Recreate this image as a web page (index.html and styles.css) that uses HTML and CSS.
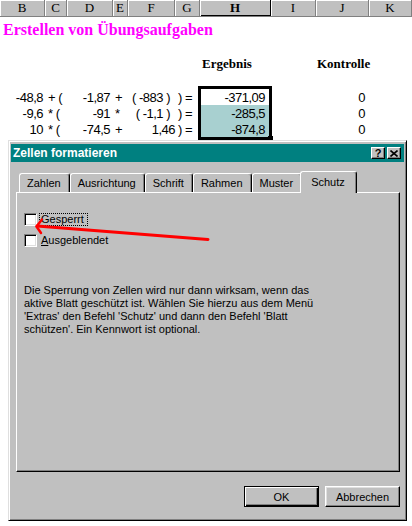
FILE: index.html
```html
<!DOCTYPE html>
<html lang="de">
  <head>
    <meta charset="UTF-8" />
    <meta name="viewport" content="width=device-width, initial-scale=1.0" />
    <title>Zellen formatieren</title>
    <link rel="stylesheet" href="styles.css">
  </head>
  <body>
    <div class="sheet">
      <div class="row head">
        <div class="hd">B</div>
        <div class="hd">C</div>
        <div class="hd">D</div>
        <div class="hd">E</div>
        <div class="hd">F</div>
        <div class="hd">G</div>
        <div class="hd hd-sel">H</div>
        <div class="hd">I</div>
        <div class="hd">J</div>
        <div class="hd">K</div>
      </div>
      <div class="title">Erstellen von Übungsaufgaben</div>
      <div class="row labels">
        <div class="lbl lbl-h">Ergebnis</div>
        <div class="lbl lbl-j">Kontrolle</div>
      </div>
      <div class="data">
        <div class="row">
          <div class="c r pb">-48,8</div>
          <div class="c l">+ (</div>
          <div class="c r pd">-1,87</div>
          <div class="c l pe">+</div>
          <div class="c r pf">( -883 )</div>
          <div class="c l">) =</div>
          <div class="c r res first">-371,09<div class="selection"><span class="handle"></span></div></div>
          <div class="c"></div>
          <div class="c r pj">0</div>
          <div class="c"></div>
        </div>
        <div class="row">
          <div class="c r pb">-9,6</div>
          <div class="c l">* (</div>
          <div class="c r pd">-91</div>
          <div class="c l pe">*</div>
          <div class="c r pf">( -1,1 )</div>
          <div class="c l">) =</div>
          <div class="c r res marked">-285,5</div>
          <div class="c"></div>
          <div class="c r pj">0</div>
          <div class="c"></div>
        </div>
        <div class="row">
          <div class="c r pb">10</div>
          <div class="c l">* (</div>
          <div class="c r pd">-74,5</div>
          <div class="c l pe">+</div>
          <div class="c r">1,46</div>
          <div class="c l">) =</div>
          <div class="c r res marked">-874,8</div>
          <div class="c"></div>
          <div class="c r pj">0</div>
          <div class="c"></div>
        </div>
      </div>
    </div>

    <div class="dialog">
      <div class="titlebar">
        <span class="caption">Zellen formatieren</span>
        <span class="tb-btn">?</span>
        <span class="tb-btn">
          <svg width="8" height="7" viewBox="0 0 8 7"><path d="M0.5 0.5 L7.5 6.5 M7.5 0.5 L0.5 6.5" stroke="#000" stroke-width="1.6"/></svg>
        </span>
      </div>
      <div class="tabs">
        <div class="tab">Zahlen</div>
        <div class="tab">Ausrichtung</div>
        <div class="tab">Schrift</div>
        <div class="tab">Rahmen</div>
        <div class="tab">Muster</div>
        <div class="tab active">Schutz</div>
      </div>
      <div class="panel">
        <div class="check"><span class="box"></span><span class="focus">Gesperrt</span></div>
        <div class="check"><span class="box"></span><span class="text"><u>A</u>usgeblendet</span></div>
        <p class="note">Die Sperrung von Zellen wird nur dann wirksam, wenn das<br>aktive Blatt geschützt ist. Wählen Sie hierzu aus dem Menü<br>'Extras' den Befehl 'Schutz' und dann den Befehl 'Blatt<br>schützen'. Ein Kennwort ist optional.</p>
      </div>
      <div class="buttons">
        <button class="btn default">OK</button>
        <button class="btn">Abbrechen</button>
      </div>
    </div>

    <svg class="arrow" width="412" height="526" viewBox="0 0 412 526">
      <path d="M208 239.5 L37 226" stroke="#ff0000" stroke-width="3" fill="none" stroke-linecap="round"/>
      <path d="M42 219.5 L36.5 226.5 L41 233" stroke="#ff0000" stroke-width="2.5" fill="none" stroke-linecap="round" stroke-linejoin="round"/>
    </svg>
  </body>
</html>
```

FILE: styles.css
```css
:root {
  --cols: 45px 22px 46px 15px 47px 25px 71px 45px 53px 43px;
}
body {
  margin: 0;
  width: 412px;
  height: 526px;
  overflow: hidden;
  position: relative;
  background: #fff;
  font-family: "Liberation Sans", Arial, sans-serif;
  color: #000;
}
.row {
  display: grid;
  grid-template-columns: var(--cols);
}

/* spreadsheet */
.head {
  height: 16px;
  background: #c0c0c0;
  border-bottom: 1px solid #808080;
}
.hd {
  border-right: 1px solid #808080;
  box-shadow: inset 1px 1px #fff;
  text-align: center;
  font: 13px/16px "Liberation Serif", serif;
}
.hd-sel {
  font-weight: bold;
  border-right-color: #000;
  box-shadow: inset 1px 1px #fff, inset 0 -1px #000;
}
.title {
  height: 24px;
  padding-left: 3px;
  font: bold 16px/25px "Liberation Serif", serif;
  color: #ff00ff;
}
.labels {
  margin-top: 14px;
  height: 17px;
  font: bold 13px/17px "Liberation Serif", serif;
}
.lbl-h {
  grid-column: 7;
  padding-left: 2px;
}
.lbl-j {
  grid-column: 9;
  padding-left: 1px;
}
.data {
  margin-top: 17px;
}
.data .row {
  height: 16px;
}
.c {
  padding-top: 2px;
  font: 13px/14px "Liberation Sans Narrow", "Liberation Sans", sans-serif;
  letter-spacing: -0.5px;
  white-space: pre;
}
.r {
  text-align: right;
}
.l {
  padding-left: 3px;
}
.pb {
  padding-right: 2px;
}
.pd {
  padding-right: 3px;
}
.pe {
  padding-left: 2px;
}
.pf {
  padding-right: 5px;
}
.pj {
  padding-right: 4px;
}
.res {
  padding-right: 6px;
}
.first {
  position: relative;
}
.marked {
  background: #a8d0d0;
}
.selection {
  position: absolute;
  left: -2px;
  top: -3px;
  width: 74px;
  height: 54px;
  box-sizing: border-box;
  border: 3px solid #000;
}
.handle {
  position: absolute;
  right: -4px;
  bottom: -4px;
  width: 5px;
  height: 5px;
  background: #000;
}

/* dialog */
.dialog {
  position: absolute;
  left: 8px;
  top: 140px;
  width: 399px;
  height: 381px;
  box-sizing: border-box;
  padding: 2px 1px 1px 1px;
  background: #c0c0c0;
  border: 1px solid;
  border-color: #dfdfdf #000 #000 #dfdfdf;
  box-shadow: inset 1px 1px #fff, inset -1px -1px #808080;
  font-size: 11px;
}
.titlebar {
  display: flex;
  align-items: center;
  height: 18px;
  margin: 1px 1px 0 1px;
  background: #008080;
}
.caption {
  flex: 1;
  padding-left: 2px;
  color: #fff;
  font-weight: bold;
  font-size: 12px;
}
.tb-btn {
  display: flex;
  align-items: center;
  justify-content: center;
  width: 14px;
  height: 12px;
  box-sizing: border-box;
  margin-right: 1px;
  background: #c0c0c0;
  border: 1px solid;
  border-color: #fff #000 #000 #fff;
  box-shadow: inset -1px -1px #808080;
  font-weight: bold;
  font-size: 11px;
  line-height: 10px;
}
.tb-btn:last-child {
  margin-right: 3px;
  margin-left: 1px;
}
.tabs {
  display: flex;
  margin: 9px 5px 0 6px;
  padding-left: 3px;
  height: 21px;
}
.tab {
  height: 19px;
  margin-top: 2px;
  box-sizing: border-box;
  padding: 0 8px 0 7px;
  border: 1px solid;
  border-bottom: none;
  border-color: #fff #000 #fff #fff;
  border-radius: 3px 3px 0 0;
  box-shadow: inset -1px 0 #808080;
  line-height: 18px;
  white-space: nowrap;
}
.tab.active {
  position: relative;
  z-index: 1;
  height: 22px;
  margin: 0 -2px -1px -2px;
  padding: 0 11px 0 10px;
  background: #c0c0c0;
  line-height: 21px;
}
.panel {
  height: 280px;
  box-sizing: border-box;
  margin: 0 5px 0 6px;
  padding: 20px 7px 0 7px;
  border: 1px solid;
  border-color: #fff #000 #000 #fff;
  box-shadow: inset -1px -1px #808080;
}
.check {
  display: flex;
  align-items: center;
  height: 13px;
  margin-bottom: 8px;
  line-height: 13px;
}
.box {
  width: 13px;
  height: 13px;
  box-sizing: border-box;
  background: #fff;
  border: 1px solid;
  border-color: #808080 #fff #fff #808080;
  box-shadow: inset 1px 1px #000, inset -1px -1px #dfdfdf;
}
.focus {
  margin-left: 2px;
  padding: 0 3px 0 1px;
  border: 1px dotted #000;
  line-height: 11px;
}
.text {
  margin-left: 4px;
}
.note {
  margin: 37px 0 0 0;
  line-height: 13px;
}
.buttons {
  display: flex;
  justify-content: flex-end;
  gap: 6px;
  margin: 14px 5px 0 0;
}
.btn {
  width: 75px;
  height: 21px;
  padding: 0;
  background: #c0c0c0;
  border: 1px solid;
  border-color: #fff #000 #000 #fff;
  box-shadow: inset -1px -1px #808080, inset 1px 1px #dfdfdf;
  font: 11px "Liberation Sans", Arial, sans-serif;
  color: #000;
}
.btn.default {
  border-color: #000;
  box-shadow: inset 1px 1px #fff, inset -1px -1px #000, inset -2px -2px #808080;
}

.arrow {
  position: absolute;
  left: 0;
  top: 0;
  pointer-events: none;
}
```
